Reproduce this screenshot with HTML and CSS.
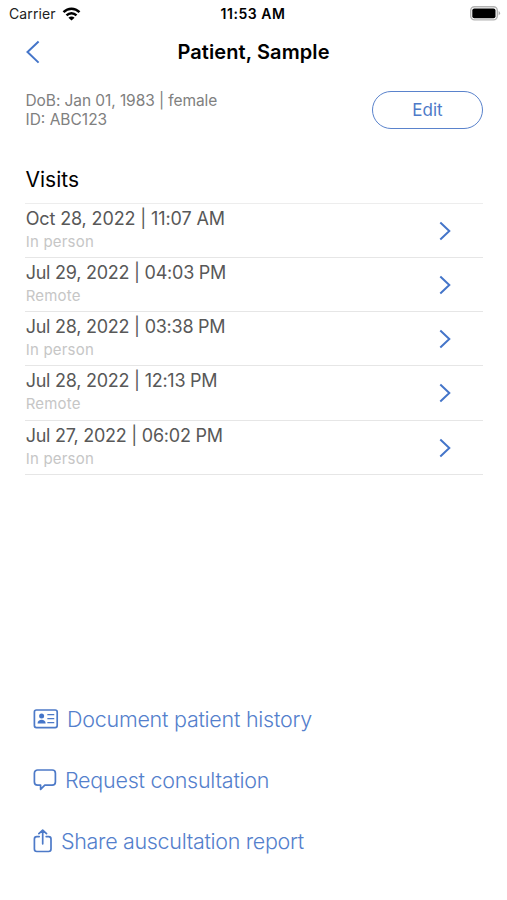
FILE: index.html
```html
<!DOCTYPE html>
<html lang="en">
<head>
<meta charset="utf-8">
<title>Patient, Sample</title>
<link rel="stylesheet" href="styles.css">
</head>
<body>
<div class="status">
  <div class="carrier"><span>Carrier</span>
    <svg width="19" height="14" viewBox="0 0 18 14" fill="none" stroke="#000" stroke-width="2.4"><path d="M1 5.2C5.6.5 12.4.5 17 5.2M4 8.4c2.9-2.9 7.1-2.9 10 0"/><path d="M9 13.6 5.9 10.7c1.8-1.7 4.4-1.7 6.2 0z" fill="#000" stroke="none"/></svg>
  </div>
  <time class="clock">11:53 AM</time>
  <svg class="battery" width="31" height="15" viewBox="0 0 31 15"><rect x=".7" y=".7" width="26.6" height="13.2" rx="3.8" fill="#fff" stroke="#b3b3b3" stroke-width="1.4"/><rect x="2.3" y="2.4" width="23.2" height="9.8" rx="2" fill="#000"/><path d="M28.6 5.1q3 2.2 0 4.4z" fill="#aaa"/></svg>
</div>
<header class="nav">
  <svg class="back" width="14" height="24" viewBox="0 0 14 24"><path d="M12.6 1.6 1.5 12l11.1 10.6"/></svg>
  <h1>Patient, Sample</h1>
</header>
<section class="patient">
  <div class="details"><div class="dob">DoB: Jan 01, 1983 | female</div><div class="pid">ID: ABC123</div></div>
  <button class="edit">Edit</button>
</section>
<main>
  <h2>Visits</h2>
  <ul class="visits">
    <li><div><div class="when latest">Oct 28, 2022 | 11:07 AM</div><div class="kind">In person</div></div><svg class="go" width="12" height="20" viewBox="0 0 12 20"><path d="m1.3 1.5 9 8.5-9 8.5"/></svg></li>
    <li><div><div class="when">Jul 29, 2022 | 04:03 PM</div><div class="kind">Remote</div></div><svg class="go" width="12" height="20" viewBox="0 0 12 20"><path d="m1.3 1.5 9 8.5-9 8.5"/></svg></li>
    <li><div><div class="when">Jul 28, 2022 | 03:38 PM</div><div class="kind">In person</div></div><svg class="go" width="12" height="20" viewBox="0 0 12 20"><path d="m1.3 1.5 9 8.5-9 8.5"/></svg></li>
    <li><div><div class="when">Jul 28, 2022 | 12:13 PM</div><div class="kind">Remote</div></div><svg class="go" width="12" height="20" viewBox="0 0 12 20"><path d="m1.3 1.5 9 8.5-9 8.5"/></svg></li>
    <li><div><div class="when">Jul 27, 2022 | 06:02 PM</div><div class="kind">In person</div></div><svg class="go" width="12" height="20" viewBox="0 0 12 20"><path d="m1.3 1.5 9 8.5-9 8.5"/></svg></li>
  </ul>
</main>
<nav class="actions">
  <a class="history"><svg width="26" height="20" viewBox="0 0 26 20"><rect x="1.4" y="1" width="22.8" height="17.6" rx="2"/><g class="solid"><circle cx="8.6" cy="7.1" r="2.5"/><path d="M4.5 14.4c0-5 8.2-5 8.2 0z"/></g><path class="thin" d="M14.8 5.7h6M14.8 9.7h6M14.8 13.7h6"/></svg><span>Document patient history</span></a>
  <a class="consult"><svg width="24" height="22" viewBox="0 0 24 22"><path d="M4.6 1h14.6a3.2 3.2 0 0 1 3.2 3.2V13a3.2 3.2 0 0 1-3.2 3.2h-7.4L7.6 20.4v-4.2h-3A3.2 3.2 0 0 1 1.4 13V4.2A3.2 3.2 0 0 1 4.6 1z"/></svg><span>Request consultation</span></a>
  <a class="share"><svg width="20" height="24" viewBox="0 0 20 24"><path d="M6.2 7.6H3.8a2.4 2.4 0 0 0-2.4 2.4v10.1a2.4 2.4 0 0 0 2.4 2.4h11.8a2.4 2.4 0 0 0 2.4-2.4V10a2.4 2.4 0 0 0-2.4-2.4h-2.4M9.7 14.8V1.1M5.9 4.7l3.8-3.6 3.8 3.6"/></svg><span>Share auscultation report</span></a>
</nav>
</body>
</html>
```

FILE: styles.css
```css
* { box-sizing: border-box; margin: 0; padding: 0; }
body { width: 507px; height: 900px; overflow: hidden; background: #fff; color: #000; font-family: Inter, "Liberation Sans", sans-serif; display: flex; flex-direction: column; }
svg { display: block; flex: none; }
.status { height: 27px; display: grid; grid-template-columns: 1fr auto 1fr; align-items: center; padding: 0 6px 0 9px; }
.carrier { display: flex; align-items: center; gap: 6px; font-size: 14px; letter-spacing: .1px; color: #222; }
.clock { font-size: 14px; font-weight: 600; letter-spacing: .55px; margin: 0 1px 0 -3px; }
.battery { justify-self: end; }
.nav { height: 50px; display: grid; grid-template-columns: 1fr auto 1fr; align-items: center; padding: 0 26px; }
.back { fill: none; stroke: #4475c9; stroke-width: 2; }
h1 { font-size: 20px; font-weight: 600; letter-spacing: .1px; grid-column: 2; }
.patient { height: 67px; padding: 14px 24px 0 25px; display: flex; justify-content: space-between; align-items: flex-start; }
.details { font-size: 15.5px; line-height: 19px; letter-spacing: -.08px; color: #808080; padding-left: .5px; }
.pid { letter-spacing: 0; }
.edit { width: 111px; height: 38px; border: 1.5px solid #5a83cc; border-radius: 19px; background: #fff; color: #4d7ac8; font: 400 17px Inter, sans-serif; }
main { padding: 21px 24px 0 25px; }
h2 { font-size: 21px; font-weight: 400; line-height: 30px; height: 38px; padding-left: .5px; }
.visits { list-style: none; border-top: 1.5px solid #ededed; }
.visits li { height: 54.15px; border-bottom: 1.5px solid #e6e6e6; display: flex; justify-content: space-between; padding: 2px 32px 0 .7px; }
.when { font-size: 18px; line-height: 25px; letter-spacing: -.25px; color: #585858; white-space: nowrap; }
.when.latest { letter-spacing: -.13px; }
.kind { font-size: 15px; line-height: 22px; letter-spacing: .2px; color: #c6c6c6; }
.go { margin-top: 15px; fill: none; stroke: #4475c9; stroke-width: 2; }
.actions { margin-top: 214px; padding-left: 33px; color: #5480cc; }
.actions a { height: 61px; display: flex; align-items: center; gap: 8px; font-size: 21.5px; font-weight: 300; letter-spacing: -.25px; white-space: nowrap; }
.actions svg { fill: none; stroke: #4d7ac8; stroke-width: 1.7; stroke-linejoin: round; stroke-linecap: round; }
.actions .solid { fill: #4475c9; stroke: none; }
.actions .thin { stroke-width: 1.2; }
.actions .share { letter-spacing: -.32px; }
```
